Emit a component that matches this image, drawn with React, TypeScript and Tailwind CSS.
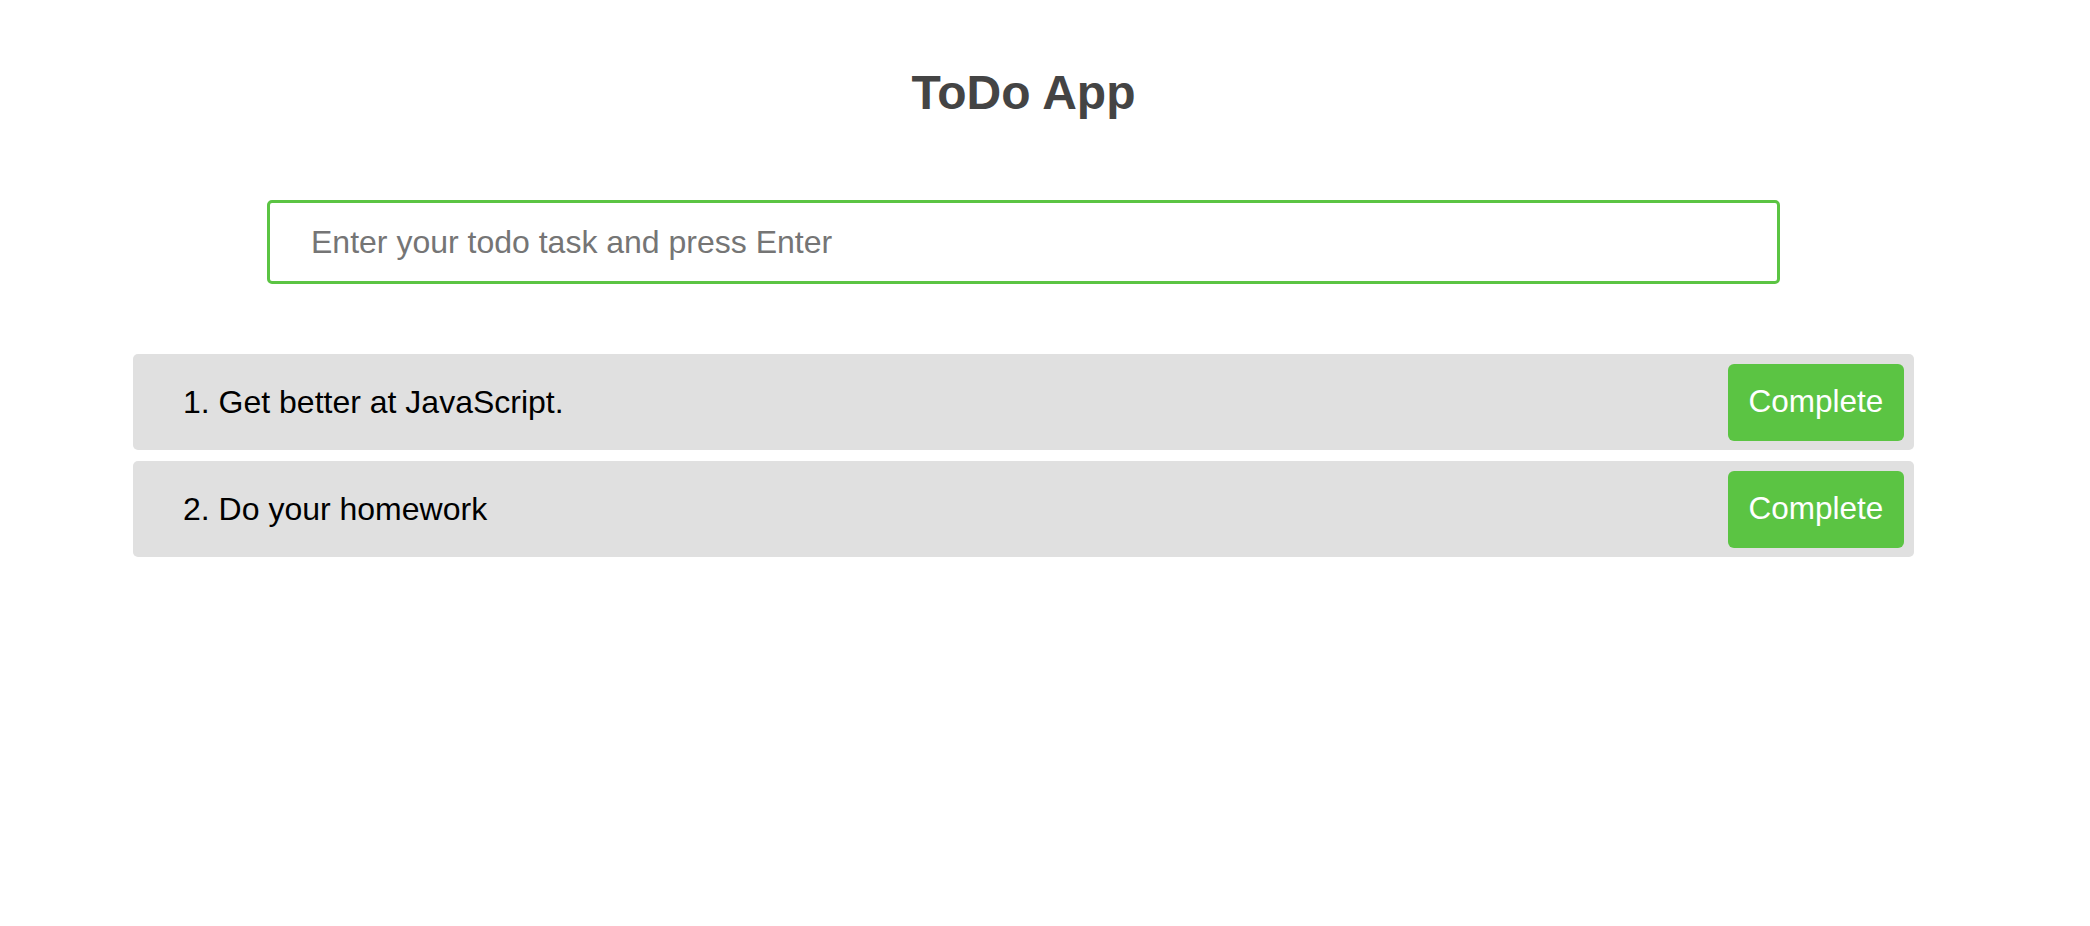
import React, { useState } from "react";

interface ITodo {
  id: number;
  text: string;
}

const TodoRow = ({ index, todo, onComplete }: { index: number; todo: ITodo; onComplete: (id: number) => void }) => {
  return (
    <div className="w-full h-[96px] bg-[#e0e0e0] rounded-[5px] flex items-center justify-between pl-[50px] pr-[10px]">
      <span className="text-[32px] text-black">
        {index + 1}. {todo.text}
      </span>
      <button
        className="w-[176px] h-[77px] bg-[#5bc443] rounded-[6px] text-white text-[31.5px] flex items-center justify-center"
        onClick={() => onComplete(todo.id)}
      >
        Complete
      </button>
    </div>
  );
};

const App = () => {
  const [task, setTask] = useState<string>("");
  const [todos, setTodos] = useState<ITodo[]>([
    { id: 1, text: "Get better at JavaScript." },
    { id: 2, text: "Do your homework" },
  ]);

  const handleKeyDown = (e: React.KeyboardEvent<HTMLInputElement>) => {
    if (e.key === "Enter" && task.trim()) {
      setTodos([...todos, { id: Date.now(), text: task.trim() }]);
      setTask("");
    }
  };

  const handleComplete = (id: number) => {
    setTodos(todos.filter((t) => t.id !== id));
  };

  return (
    <div className="w-full min-h-[926px] bg-white" style={{ fontFamily: '"Liberation Sans", Arial, sans-serif' }}>
      <div className="w-[2047px] flex flex-col items-center">
        {/* Title */}
        <h1 className="mt-[69px] h-[47px] leading-none text-[48px] font-bold text-[#444444]">ToDo App</h1>

        {/* Input */}
        <input
          autoFocus
          value={task}
          onChange={(e) => setTask(e.target.value)}
          onKeyDown={handleKeyDown}
          placeholder="Enter your todo task and press Enter"
          className="mt-[84px] w-[1513px] h-[84px] border-[3px] border-[#5bc443] rounded-[5px] pl-[41px] text-[32px] text-black placeholder:text-[#757575] outline-none caret-black"
        />

        {/* List */}
        <div className="mt-[70px] w-full px-[133px] flex flex-col gap-[11px]">
          {todos.map((todo, i) => (
            <TodoRow key={todo.id} index={i} todo={todo} onComplete={handleComplete} />
          ))}
        </div>
      </div>
    </div>
  );
};

export default App;
